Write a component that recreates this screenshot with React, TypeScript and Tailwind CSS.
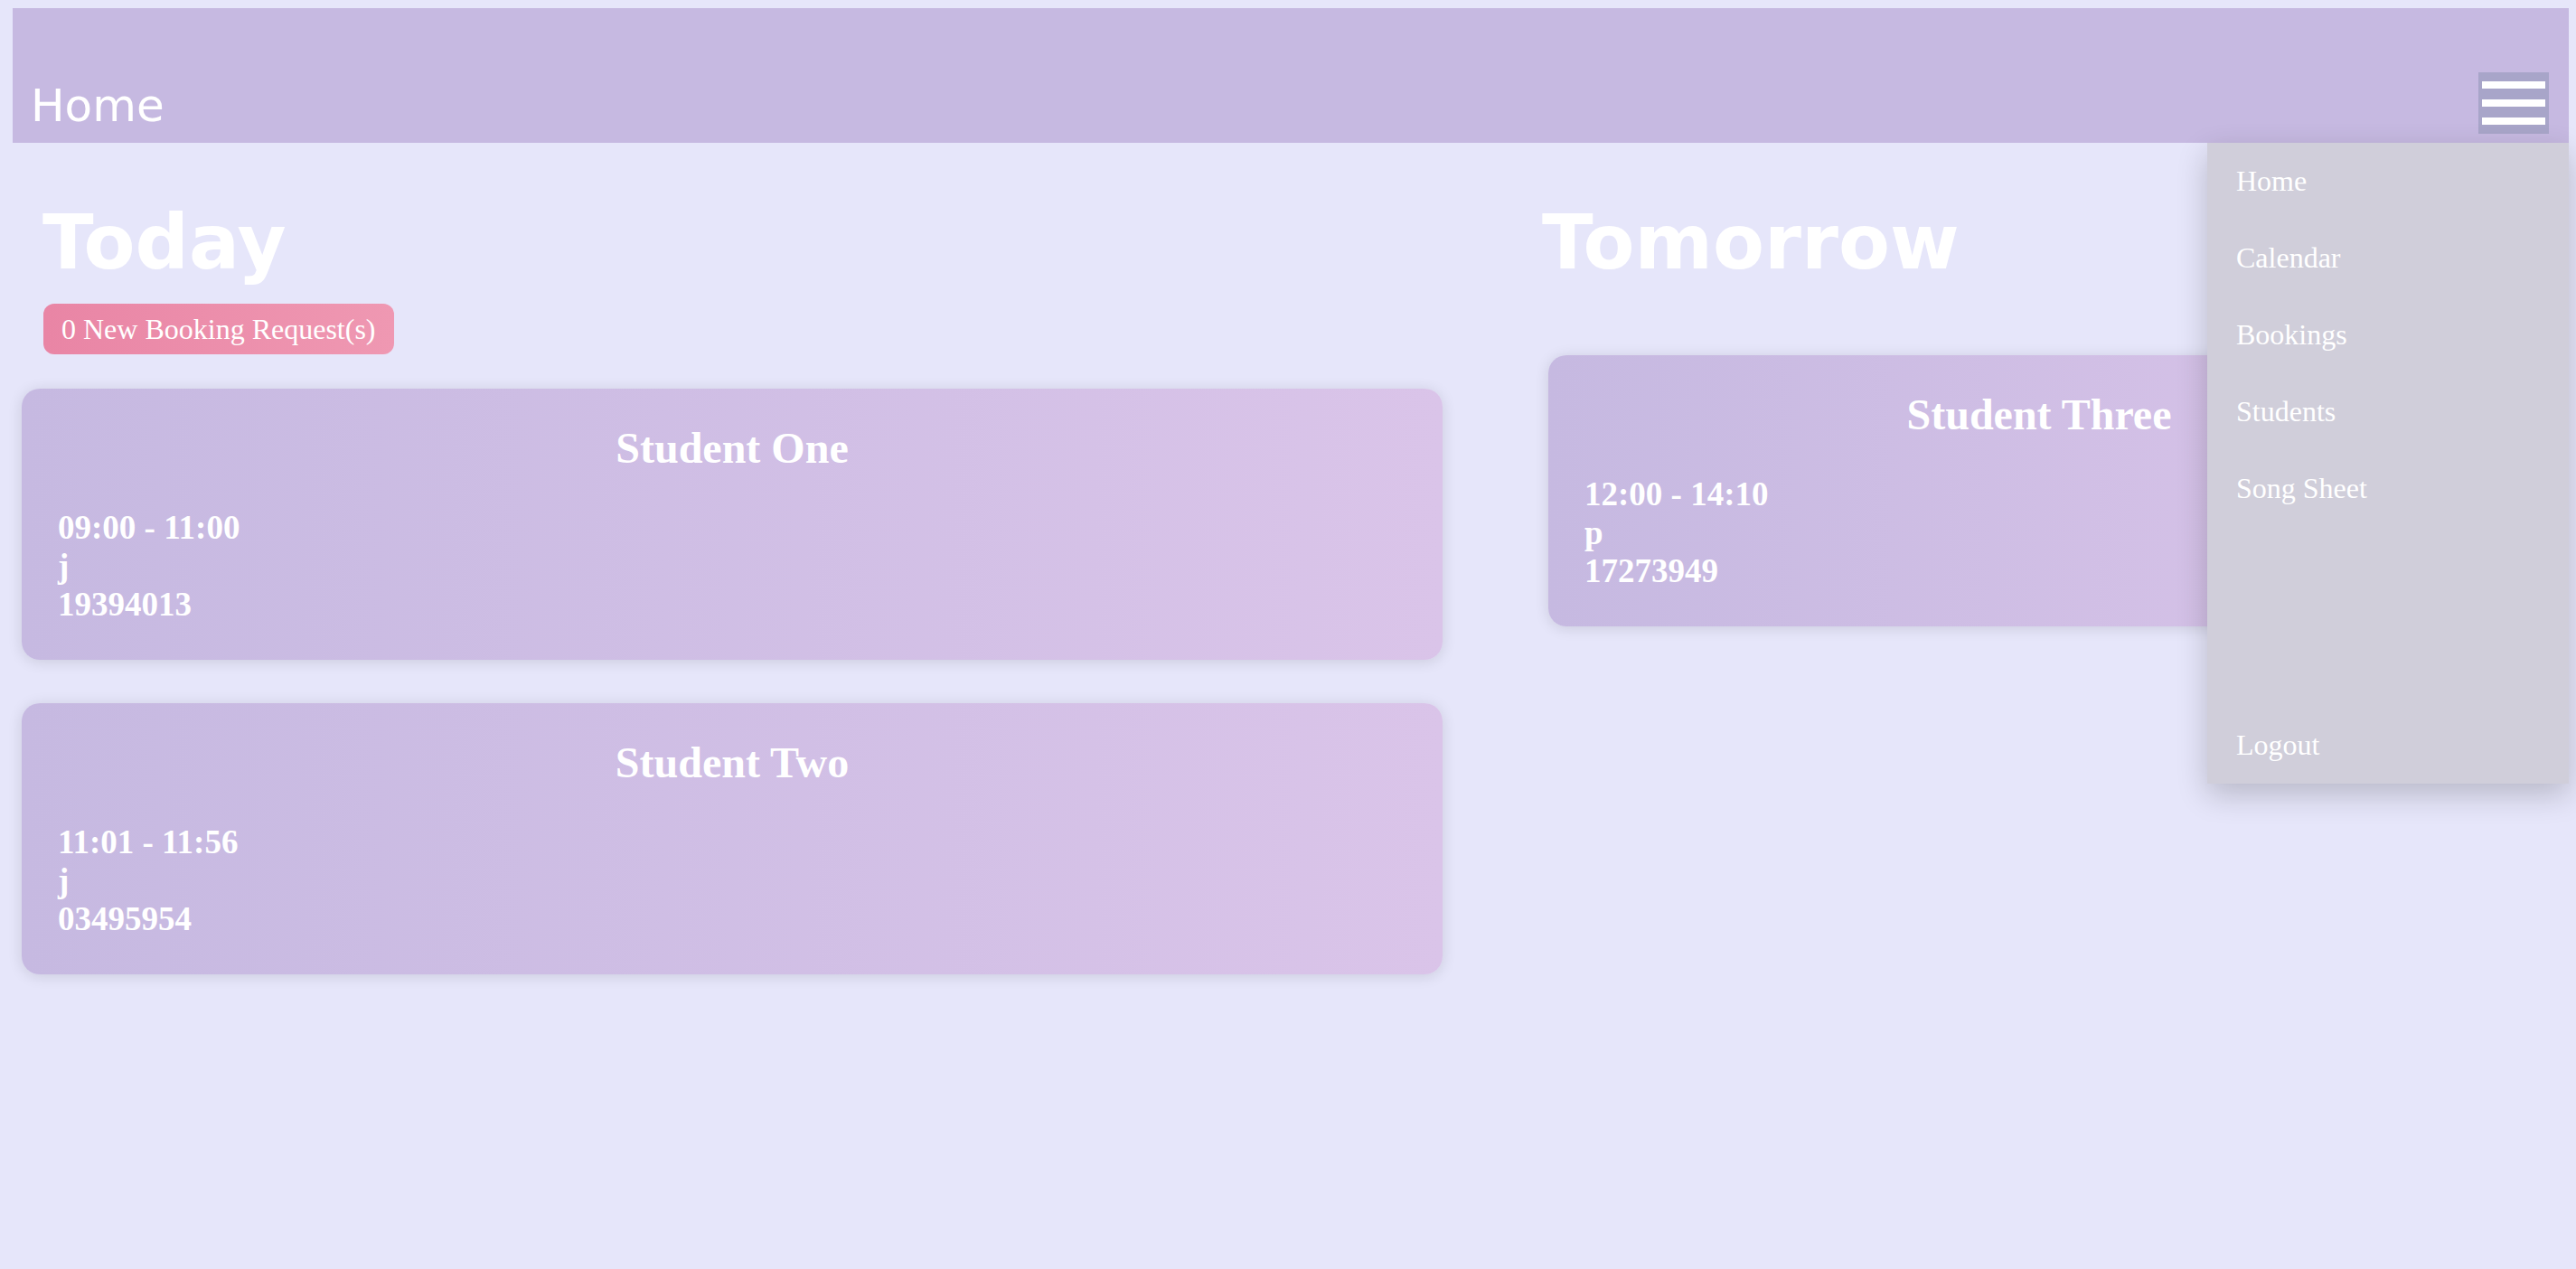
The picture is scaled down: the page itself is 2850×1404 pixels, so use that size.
import React from 'react'

type Booking = {
  name: string
  time: string
  note: string
  phone: string
}

const today: Booking[] = [
  { name: 'Student One', time: '09:00 - 11:00', note: 'j', phone: '19394013' },
  { name: 'Student Two', time: '11:01 - 11:56', note: 'j', phone: '03495954' },
]

const tomorrow: Booking[] = [
  { name: 'Student Three', time: '12:00 - 14:10', note: 'p', phone: '17273949' },
]

const menuLinks = ['Home', 'Calendar', 'Bookings', 'Students', 'Song Sheet']

function BookingCard({ booking, className = '' }: { booking: Booking; className?: string }) {
  return (
    <div
      className={`h-[300px] rounded-[20px] bg-linear-to-r from-[#C6B9E1] to-[#DAC4E9] px-[40px] pt-[39px] text-white shadow-[0_2px_16px_rgba(0,0,0,0.12)] font-['Liberation_Serif',serif] font-bold ${className}`}
    >
      <h3 className="text-center text-[48px] leading-[53px] mb-[41px]">{booking.name}</h3>
      <div className="text-[37px] leading-[42.5px]">
        <p>{booking.time}</p>
        <p>{booking.note}</p>
        <p>{booking.phone}</p>
      </div>
    </div>
  )
}

export default function App() {
  return (
    <div className="relative min-h-screen bg-[#E6E6FA] pt-[9px]">
      {/* top bar */}
      <header className="ml-[14px] mr-[8px] h-[149px] bg-[#C6B9E1] flex items-end justify-between">
        <span className="pl-[20px] pb-[12px] text-[50px] leading-[58px] text-white font-['DejaVu_Sans',sans-serif]">
          Home
        </span>
        <button className="mr-[22px] mb-[10px] w-[78px] h-[68px] bg-[#A8A5C9] flex flex-col gap-[12px] py-[10px] px-[4px]">
          <span className="block h-[8px] w-[70px] bg-white" />
          <span className="block h-[8px] w-[70px] bg-white" />
          <span className="block h-[8px] w-[70px] bg-white" />
        </button>
      </header>

      <main className="flex items-start">
        <section className="ml-[24px] w-[1572px]">
          <h1 className="ml-[23px] mt-[63px] text-[83px] leading-[95px] font-bold text-white font-['DejaVu_Sans',sans-serif]">
            Today
          </h1>
          <div className="ml-[24px] mt-[20px] inline-block rounded-[12px] bg-linear-to-r from-[#E985A5] to-[#EF98B2] px-[20px] py-[9px] text-[32px] leading-[38px] text-white font-['Liberation_Serif',serif]">
            0 New Booking Request(s)
          </div>
          <div className="mt-[38px] flex flex-col gap-[48px]">
            {today.map((b) => (
              <BookingCard key={b.name} booking={b} />
            ))}
          </div>
        </section>

        <section className="ml-[110px] w-[1093px]">
          <h1 className="mt-[63px] text-[83px] leading-[95px] font-bold text-white font-['DejaVu_Sans',sans-serif]">
            Tomorrow
          </h1>
          <div className="mt-[77px] ml-[7px] w-[1086px]">
            {tomorrow.map((b) => (
              <BookingCard key={b.name} booking={b} />
            ))}
          </div>
        </section>
      </main>

      {/* open dropdown menu */}
      <nav className="absolute right-[8px] top-[158px] w-[400px] h-[709px] bg-[#D0CEDA] shadow-[0_12px_32px_rgba(0,0,0,0.2)] flex flex-col justify-between font-['Liberation_Serif',serif] text-white text-[32px]">
        <ul>
          {menuLinks.map((l) => (
            <li key={l} className="px-[32px] py-[24px] leading-[37px]">
              {l}
            </li>
          ))}
        </ul>
        <div className="px-[32px] py-[24px] leading-[37px]">Logout</div>
      </nav>
    </div>
  )
}
